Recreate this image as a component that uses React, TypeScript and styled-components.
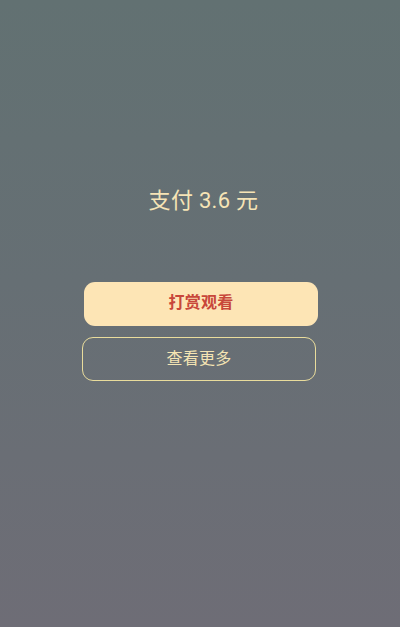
import React from 'react';
import styled, { createGlobalStyle } from 'styled-components';

const GlobalStyle = createGlobalStyle`
  html, body, #root {
    margin: 0;
    padding: 0;
    height: 100%;
  }
  body {
    font-family: Roboto, "Noto Sans CJK SC", sans-serif;
  }
`;

const Screen = styled.div`
  height: 627px;
  width: 100%;
  background: linear-gradient(180deg, #627172 0%, #666f74 45%, #6e6d76 100%);
  display: flex;
  flex-direction: column;
  align-items: center;
  padding-top: 185px;
  box-sizing: border-box;
`;

const Price = styled.div`
  color: #f6e4b6;
  font-size: 22px;
  line-height: 32px;
  letter-spacing: 0.3px;
  padding-left: 7px;
`;

const Actions = styled.div`
  margin-top: 65px;
  width: 234px;
  display: flex;
  flex-direction: column;
  gap: 11px;
`;

const ActionButton = styled.button<{ $primary?: boolean }>`
  box-sizing: border-box;
  height: 44px;
  width: 100%;
  border-radius: 11px;
  font-family: inherit;
  font-size: 16px;
  line-height: 1;
  padding: 0 0 ${(p) => (p.$primary ? '2px' : '0')};
  letter-spacing: 0.3px;
  cursor: pointer;
  border: ${(p) => (p.$primary ? 'none' : '1.5px solid #e9dc9c')};
  background: ${(p) => (p.$primary ? '#fde5b5' : 'transparent')};
  color: ${(p) => (p.$primary ? '#c8473a' : '#f4e4b3')};
  font-weight: ${(p) => (p.$primary ? 700 : 400)};
  margin-left: ${(p) => (p.$primary ? '1px' : '-1px')};
`;

export default function App() {
  return (
    <>
      <GlobalStyle />
      <Screen>
        <Price>支付 3.6 元</Price>
        <Actions>
          <ActionButton $primary>打赏观看</ActionButton>
          <ActionButton>查看更多</ActionButton>
        </Actions>
      </Screen>
    </>
  );
}
